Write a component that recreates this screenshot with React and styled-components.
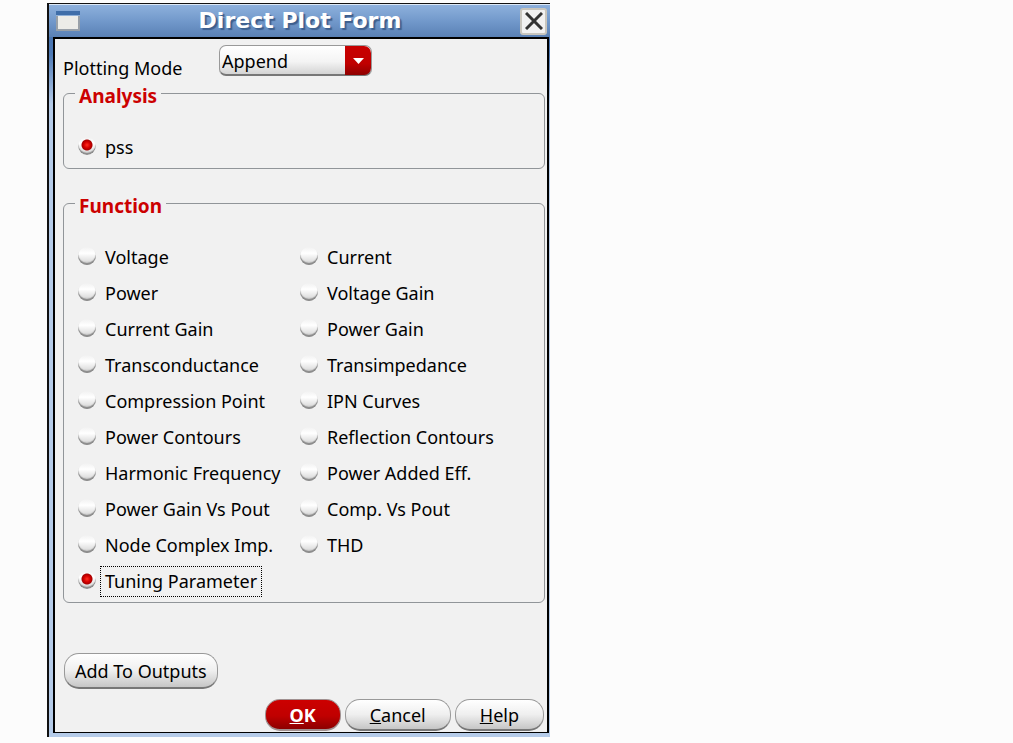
import React, { useState } from "react";
import styled, { createGlobalStyle } from "styled-components";

const functions = [
  "Voltage",
  "Current",
  "Power",
  "Voltage Gain",
  "Current Gain",
  "Power Gain",
  "Transconductance",
  "Transimpedance",
  "Compression Point",
  "IPN Curves",
  "Power Contours",
  "Reflection Contours",
  "Harmonic Frequency",
  "Power Added Eff.",
  "Power Gain Vs Pout",
  "Comp. Vs Pout",
  "Node Complex Imp.",
  "THD",
  "Tuning Parameter",
];

const App = () => {
  const [mode, setMode] = useState("Append");
  const [selected, setSelected] = useState("Tuning Parameter");

  return (
    <>
      <GlobalStyle />
      <Window>
        <TitleBar>
          <WindowIcon viewBox="0 0 24 20" aria-hidden="true">
            <rect x="1" y="1" width="22" height="18" fill="#ecece8" stroke="#98a0a8" strokeWidth="2" />
            <rect x="0" y="0" width="24" height="4" fill="#3f6ea9" />
            <rect x="0" y="4" width="24" height="1" fill="#8fb0d8" />
          </WindowIcon>
          <Title>Direct Plot Form</Title>
          <CloseButton type="button" aria-label="Close">
            <svg width="18" height="18" viewBox="0 0 18 18" aria-hidden="true">
              <path d="M1 1l16 16M17 1L1 17" stroke="#333" strokeWidth="3" />
            </svg>
          </CloseButton>
        </TitleBar>
        <Body>
          <ModeRow>
            <ModeLabel htmlFor="mode">Plotting Mode</ModeLabel>
            <SelectBox>
              <Select id="mode" value={mode} onChange={(e) => setMode(e.target.value)}>
                <option>Append</option>
                <option>Replace</option>
                <option>New SubWin</option>
                <option>New Win</option>
              </Select>
              <Arrow aria-hidden="true">
                <svg width="11" height="6" viewBox="0 0 11 6">
                  <path d="M0 0h11L5.5 6z" fill="#fff" />
                </svg>
              </Arrow>
            </SelectBox>
          </ModeRow>

          <Group>
            <Legend>Analysis</Legend>
            <Options>
              <Option>
                <Radio name="analysis" defaultChecked />
                <OptionText>pss</OptionText>
              </Option>
            </Options>
          </Group>

          <Group>
            <Legend>Function</Legend>
            <Options>
              {functions.map((name) => (
                <Option key={name}>
                  <Radio
                    name="function"
                    checked={selected === name}
                    onChange={() => setSelected(name)}
                  />
                  <OptionText $focused={selected === name}>{name}</OptionText>
                </Option>
              ))}
            </Options>
          </Group>

          <OutputRow>
            <Button type="button" $large>
              Add To Outputs
            </Button>
          </OutputRow>
          <Footer>
            <PrimaryButton type="button">
              <u>O</u>K
            </PrimaryButton>
            <Button type="button">
              <u>C</u>ancel
            </Button>
            <Button type="button">
              <u>H</u>elp
            </Button>
          </Footer>
        </Body>
      </Window>
    </>
  );
};

const GlobalStyle = createGlobalStyle`
  * {
    box-sizing: border-box;
  }

  body {
    margin: 0;
    background-color: #fcfcfc;
    color: #000;
    font-family: "Noto Sans", "Open Sans", sans-serif;
    font-size: 18px;
  }

  button,
  select {
    font: inherit;
    color: inherit;
  }
`;

const Window = styled.main`
  max-width: 503px;
  margin: 3px 16px 6px 47px;
  padding: 0 1px 4px 4px;
  border-top: 1px solid #111;
  border-left: 2px solid #111;
  background: linear-gradient(#3f6ba8, #4d79b5 50px, #b5cbe8 100px);
`;

const TitleBar = styled.header`
  display: flex;
  align-items: center;
  justify-content: space-between;
  height: 33px;
  margin: 0 -1px 0 -4px;
  padding: 0 3px 0 7px;
  border-top: 1px solid #dce8f6;
  background: linear-gradient(#8db0dc, #7299cb 50%, #5a81b5);
`;

const WindowIcon = styled.svg`
  width: 24px;
  height: 20px;
`;

const Title = styled.h1`
  margin: 0;
  color: #fff;
  font-family: "DejaVu Sans", sans-serif;
  font-size: 22px;
  font-weight: bold;
  line-height: 30px;
  text-shadow: 2px 2px 1px #3d5f8e;
`;

const CloseButton = styled.button`
  display: flex;
  align-items: center;
  justify-content: center;
  width: 27px;
  height: 27px;
  padding: 0;
  border: 2px solid #c9c6be;
  border-radius: 3px;
  background-color: #f1f1f1;
`;

const Body = styled.form`
  padding: 6px 2px 1px 8px;
  border: solid #000;
  border-width: 2px 2px 1px;
  background-color: #f1f1f1;
`;

const ModeRow = styled.div`
  display: flex;
`;

const ModeLabel = styled.label`
  width: 156px;
  height: 31px;
  padding-top: 10px;
  line-height: 26px;
`;

const SelectBox = styled.div`
  position: relative;
  width: 153px;
  height: 31px;
`;

const Select = styled.select`
  appearance: none;
  width: 100%;
  height: 100%;
  padding: 1px 28px 0 2px;
  border: 1px solid #999;
  border-bottom: 2px solid #777;
  border-radius: 7px;
  background: linear-gradient(#fff, #f4f4f4 55%, #d4d4d4);
`;

const Arrow = styled.span`
  position: absolute;
  top: 1px;
  right: 1px;
  bottom: 1px;
  display: flex;
  align-items: center;
  justify-content: center;
  width: 26px;
  border-radius: 0 7px 7px 0;
  background: linear-gradient(#c80000, #c00000 60%, #8e0000);
  pointer-events: none;
`;

const Group = styled.fieldset`
  min-width: 0;
  margin: 7px 0 24px;
  padding: 26px 12px 3px 14px;
  border: 1px solid #919599;
  border-radius: 6px;
`;

const Legend = styled.legend`
  margin-left: -3px;
  padding: 6px 4px 0;
  color: #cc0000;
  font-size: 19px;
  font-weight: bold;
  line-height: 14px;
`;

const Options = styled.div`
  display: grid;
  grid-template-columns: 222px 1fr;
`;

const Option = styled.label`
  display: flex;
  align-items: center;
  height: 36px;
  white-space: nowrap;
`;

const Radio = styled.input.attrs({ type: "radio" })`
  appearance: none;
  flex: none;
  width: 18px;
  height: 18px;
  margin: 0 4px 3px 0;
  border-radius: 50%;
  background: linear-gradient(#f1f1f1, #fff 35%, #e2e2e2 75%, #bbb);
  box-shadow: inset 0 -2px 1px #8a8a8a;

  &:checked {
    background:
      radial-gradient(circle at 9px 8px, #ff3020 0, #d80000 3px, #a80000 5px, transparent 6px),
      linear-gradient(#f1f1f1, #fff 35%, #e2e2e2 75%, #bbb);
  }
`;

const OptionText = styled.span`
  padding: 0 4px;
  border: 1px dotted ${(props) => (props.$focused ? "#000" : "transparent")};
  line-height: 29px;
`;

const Button = styled.button`
  height: ${(props) => (props.$large ? 36 : 32)}px;
  padding: 0 ${(props) => (props.$large ? 10 : 24)}px;
  border: 1px solid #999;
  border-bottom: 2px solid #777;
  border-radius: 15px;
  background: linear-gradient(#fff, #efefef 50%, #c6c6c6);
`;

const PrimaryButton = styled(Button)`
  border-color: #a09090;
  background: linear-gradient(#cc0000, #c00000 55%, #8c0000);
  color: #fff;
  font-weight: bold;
`;

const OutputRow = styled.div`
  margin-top: 50px;
  padding-left: 1px;
`;

const Footer = styled.footer`
  display: flex;
  justify-content: flex-end;
  gap: 4px;
  margin-top: 10px;
  padding-right: 1px;
`;

export default App;
